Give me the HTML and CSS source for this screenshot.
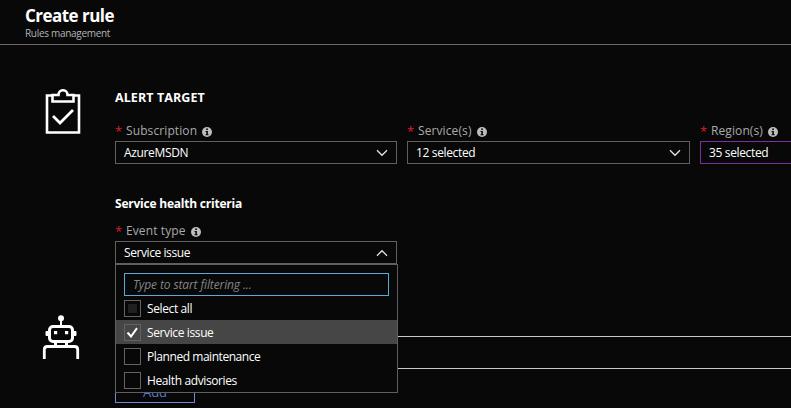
FILE: index.html
```
<!DOCTYPE html>
<html lang="en">
<head>
<meta charset="utf-8">
<title>Create rule</title>
<link rel="stylesheet" href="styles.css">
</head>
<body>
<svg class="defs" width="0" height="0">
  <symbol id="info" viewBox="0 0 10 10"><circle cx="5" cy="5" r="5" fill="#bdbdbd"/><path d="M4.2 1.6h1.7v1.5H4.2zM3.5 4h2.4v3.2h.7v1H3.5v-1h.8V5h-.8z" fill="#080808"/></symbol>
  <symbol id="down" viewBox="0 0 12 8"><path d="M1 1.3l5 5 5-5" fill="none" stroke="#e4e4e4" stroke-width="1.3"/></symbol>
</svg>
<header class="header">
  <h1>Create rule</h1>
  <p>Rules management</p>
</header>
<main>
  <section class="section target">
    <svg class="clipboard" width="36" height="46" viewBox="0 0 36 46" fill="none" stroke="#fff">
      <path d="M7 6.500H2V43.500H34V6.500H29" stroke-width="2.6"/>
      <path d="M7.500 6.500V12.500H28.500V6.500H22.500C22.500.2 13.500.2 13.500 6.500Z" stroke="none" fill="#fff"/>
      <path d="M7.500 6V12.500H28.500V6H22.500C22.500-.3 13.500-.3 13.500 6Z" fill="#080808" stroke-width="2.6"/>
      <path d="M8 27l7 7L28 21" stroke-width="2.8"/>
    </svg>
    <div class="content">
      <h2 class="t-target">ALERT TARGET</h2>
      <div class="fields">
        <div class="field">
          <div class="label"><b>*</b><span>Subscription</span><svg width="10" height="10"><use href="#info"/></svg></div>
          <div class="select"><span>AzureMSDN</span><svg width="12" height="8"><use href="#down"/></svg></div>
        </div>
        <div class="field">
          <div class="label"><b>*</b><span>Service(s)</span><svg width="10" height="10"><use href="#info"/></svg></div>
          <div class="select"><span>12 selected</span><svg width="12" height="8"><use href="#down"/></svg></div>
        </div>
        <div class="field">
          <div class="label"><b>*</b><span>Region(s)</span><svg width="10" height="10"><use href="#info"/></svg></div>
          <div class="select edited"><span>35 selected</span></div>
        </div>
      </div>
      <h2 class="criteria">Service health criteria</h2>
      <div class="field event">
        <div class="label"><b>*</b><span>Event type</span><svg width="10" height="10"><use href="#info"/></svg></div>
        <div class="select"><span>Service issue</span><svg class="up" width="12" height="8"><use href="#down"/></svg></div>
        <div class="menu">
          <div class="filter"><span>Type to start filtering ...</span></div>
          <div class="option"><i class="box partial"></i><span>Select all</span></div>
          <div class="option active"><i class="box"><svg width="13" height="11" viewBox="0 0 13 11"><path d="M1.500 5.500l3.500 4 6-8.300" fill="none" stroke="#fff" stroke-width="2"/></svg></i><span>Service issue</span></div>
          <div class="option"><i class="box"></i><span class="t-planned">Planned maintenance</span></div>
          <div class="option"><i class="box"></i><span>Health advisories</span></div>
        </div>
      </div>
    </div>
  </section>
  <section class="section actions">
    <svg class="robot" width="38" height="45" viewBox="0 0 38 45" fill="none" stroke="#fff">
      <circle cx="19" cy="3.200" r="3" fill="#fff" stroke="none"/>
      <path d="M19 5v6" stroke-width="2"/>
      <rect x="7.500" y="11.500" width="23" height="15" rx="3.500" stroke-width="3"/>
      <path d="M4 16.500h2.500v4H4zM31.500 16.500H34v4h-2.500z" fill="#fff" stroke-width="1"/>
      <path d="M12 16h3.200v3.200H12zM23 16h3.200v3.200H23z" fill="#fff" stroke="none"/>
      <path d="M13.500 27v4M24.500 27v4" stroke-width="3"/>
      <path d="M2.300 44V34.500Q2.300 31.500 5.500 31.500H32.500Q35.700 31.500 35.700 34.500V44" stroke-width="2.800"/>
    </svg>
    <div class="content">
      <div class="row"></div>
      <button class="add">Add</button>
    </div>
  </section>
</main>
</body>
</html>
```
FILE: styles.css
```
* { box-sizing: border-box; }
body { margin: 0; height: 408px; overflow: hidden; background: #080808; color: #fff; font: 12px/16px "Open Sans", "Noto Sans", sans-serif; }
h1, h2, p { margin: 0; }
span, h2 { white-space: nowrap; }
.defs { position: absolute; }
.header { height: 45px; padding: 5px 0 0 25px; border-bottom: 1px solid #6b6b6b; }
.header h1 { font-size: 17px; line-height: 22px; font-weight: 700; letter-spacing: -.53px; }
.header p { font-size: 10px; line-height: 13px; letter-spacing: -.3px; color: #b4b4b4; }
.section { display: flex; align-items: flex-start; }
.content { flex: 1; min-width: 0; }
.target { padding-top: 43px; height: 270px; }
.clipboard { margin: 1px 34.500px 0 44.500px; flex: none; }
h2 { width: max-content; margin-top: 2px; font-size: 12px; line-height: 16px; font-weight: 700; }
.t-target { font-size: 12.500px; letter-spacing: .08px; }
.fields { display: grid; grid-template-columns: 282px 283px 1fr; gap: 10px; margin-top: 15px; }
.label { display: flex; align-items: center; height: 19px; margin-bottom: 1px; color: #aaa; letter-spacing: .1px; }
.label b { width: 11px; color: #d9202c; font-size: 13px; font-weight: 400; }
.label svg { margin: 3px 0 0 5px; }
.select { display: flex; align-items: center; justify-content: space-between; height: 23px; padding: 0 8px; border: 1px solid #5f5f5f; font-weight: 500; letter-spacing: -.35px; }
.edited { border-color: #80309a; border-right: 0; }
.up { transform: rotate(180deg); }
.criteria { margin-top: 32px; letter-spacing: -.22px; }
.event { position: relative; width: 282px; margin-top: 9px; }
.event .select { letter-spacing: -.42px; }
.menu { position: absolute; z-index: 1; left: 0; top: 43px; width: 283px; height: 129px; padding-top: 8px; border: 1px solid #5f5f5f; background: #080808; }
.filter { height: 23px; margin: 0 8px; padding: 3px 8px; border: 1px solid #5aa9d6; color: #858585; font-style: italic; line-height: 16px; letter-spacing: -.12px; }
.option { display: flex; align-items: center; gap: 6px; height: 24px; padding: 1px 0 0 8px; font-weight: 500; letter-spacing: -.38px; }
.t-planned { letter-spacing: -.45px; }
.option span { padding-top: 1px; }
.active { background: #464646; }
.box { display: flex; align-items: center; justify-content: center; width: 17px; height: 17px; border: 1px solid #636363; }
.partial::before { content: ""; width: 9px; height: 9px; background: #202020; }
.robot { flex: none; margin: 0 35px 0 42px; }
.row { height: 33px; margin-top: 21px; border: solid #c9c9c9; border-width: 1px 0; }
.add { display: block; width: 80px; height: 23px; margin-top: 11px; padding: 0; border: 1px solid #6f8bd6; background: transparent; color: #5a78d0; font: 13px/22px "Open Sans", sans-serif; }
```
